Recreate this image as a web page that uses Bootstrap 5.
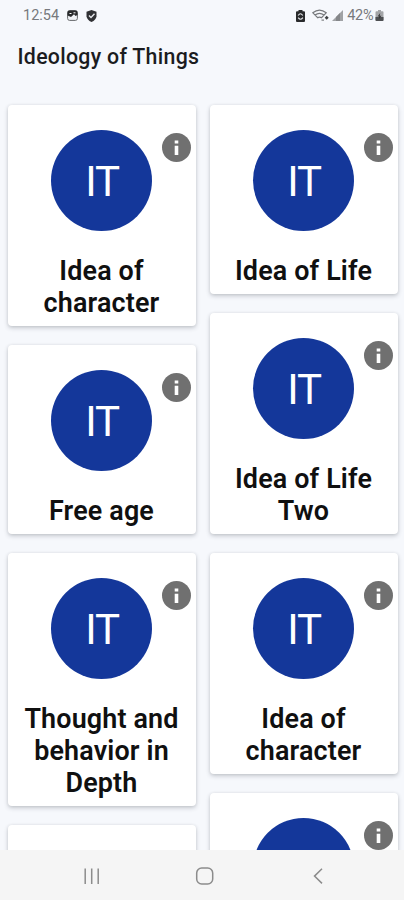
<!DOCTYPE html>
<html lang="en">
<head>
<meta charset="utf-8">
<meta name="viewport" content="width=device-width, initial-scale=1">
<title>Ideology of Things</title>
<link href="https://cdn.jsdelivr.net/npm/bootstrap@5.3.0/dist/css/bootstrap.min.css" rel="stylesheet">
<style>
body{font-family:Roboto,"Liberation Sans",sans-serif;background:#f6f8fc;color:#111;height:900px}
.status{height:31px;padding:0 20.5px 0 23px;font-size:14.5px;color:#77797d}
.status .level{margin:0 1px 0 4px;letter-spacing:-.2px}
.status .wifi{margin:0 3px 0 7px}
.app-title{height:49px;padding:2px 17.5px 0;font-size:21.3px;font-weight:500;letter-spacing:.3px;line-height:48px;color:#1b1c1f}
.feed{padding:24.6px 6.5px 0 7.5px;gap:14px;min-height:0}
.feed-col{width:188px;flex:none;gap:19px}
.idea{border:0;border-radius:4px;padding:25px 8px 6.5px;box-shadow:0 2px 4px rgba(50,60,70,.25),0 0 3px rgba(50,60,70,.08);flex:none}
.idea-next{min-height:120px}
.avatar{width:101.5px;height:101.5px;background:#14379a;color:#fff;font-size:42px;line-height:1;letter-spacing:-1.2px;padding:4px 0 0 1px}
.info{top:28.4px;right:4.5px;width:29px;height:29px}
.idea h2{font-size:26.9px;line-height:32px;font-weight:600;letter-spacing:.16px;margin:24px 0 0;color:#101010}
.sysnav{height:50px;background:#f5f5f5}
.sysnav svg,.status svg{display:block}
</style>
<script src="https://cdn.jsdelivr.net/npm/bootstrap@5.3.0/dist/js/bootstrap.bundle.min.js"></script>
</head>
<body class="d-flex flex-column overflow-hidden">
<svg class="d-none"><symbol id="info" viewBox="0 0 29 29"><circle cx="14.5" cy="14.5" r="14.5" fill="#707070"/><path d="M12.700 7.400h3.600v3.200h-3.600zM12.700 12.700h3.600v9.300h-3.600z" fill="#fff"/></symbol></svg>
<header class="flex-shrink-0">
  <div class="status d-flex align-items-center justify-content-between">
    <div class="d-flex align-items-center">
      <span class="clock">12:54</span>
      <svg class="ms-2" width="11" height="11" viewBox="0 0 11 11"><rect x=".6" y=".6" width="9.800" height="9.800" rx="2" fill="#f0f2f6" stroke="#66686b"/><path d="M.5 2.500Q.5.500 2.500.500h6q2 0 2 2V5L8.500 6 7 4.200 4 7 .5 5.500z" fill="#292a2c"/><path d="M2.500 3.500h2M6.500 2.800h2" stroke="#fff"/></svg>
      <svg class="ms-2" width="11" height="12" viewBox="0 0 11 12"><path d="M5.500 0 10.500 1.800V6.200Q10 10 5.500 12 1 10 .5 6.200V1.800z" fill="#303134"/><path d="M3 5.400 5 7.400 8.500 3.700" fill="none" stroke="#e5e7eb" stroke-width="1.400"/></svg>
    </div>
    <div class="d-flex align-items-center">
      <svg width="9" height="12" viewBox="0 0 9 12"><path d="M2.500 0h4v1.200H8q1 0 1 1V11q0 1-1 1H1q-1 0-1-1V2.200q0-1 1-1h1.500z" fill="#292a2c"/><path d="M2.100 5.500Q4.500 2 6.800 5.500M6.900 7.600Q4.500 11 2.200 7.600" fill="none" stroke="#e4e6ea" stroke-width="1.100"/></svg>
      <svg class="wifi" width="17" height="13" viewBox="0 0 17 13"><path d="M.8 3.800Q7.500-1.600 14.200 3.800L9.500 8.700Q7.500 7.400 5.700 8.700zM3 6Q7.500 2.700 12 6" fill="none" stroke="#77797c" stroke-width="1.200"/><path d="M9.500 10.300h2.500v1.700H9.500z" fill="#a0a2a5"/><path d="m14.700 6.800 2 2-2 2-2-2z" fill="#3c3e41"/></svg>
      <svg width="11" height="11" viewBox="0 0 11 11"><path d="M0 11 11 0V11z" fill="#a0a2a5"/><path d="M4 11V7L8 3V11z" fill="#85878a"/></svg>
      <span class="level">42%</span>
      <svg width="9" height="11" viewBox="0 0 8 11"><path d="M2.500 0h3v1.200H7q1 0 1 1V10q0 1-1 1H1q-1 0-1-1V2.200q0-1 1-1h1.500z" fill="#a3a5a8"/><path d="M0 7h8v3q0 1-1 1H1q-1 0-1-1z" fill="#4d4f52"/><path d="m4.700 3-2.600 3.500h1.600L3.300 9.300 6 5.800H4.300z" fill="#38393b"/></svg>
    </div>
  </div>
  <h1 class="app-title m-0">Ideology of Things</h1>
</header>
<main class="feed d-flex flex-grow-1 overflow-hidden">
  <div class="feed-col d-flex flex-column">
    <article class="idea card text-center align-items-center"><div class="avatar rounded-circle d-flex align-items-center justify-content-center">IT</div><svg class="info position-absolute"><use href="#info"/></svg><h2>Idea of<br>character</h2></article>
    <article class="idea card text-center align-items-center"><div class="avatar rounded-circle d-flex align-items-center justify-content-center">IT</div><svg class="info position-absolute"><use href="#info"/></svg><h2>Free age</h2></article>
    <article class="idea card text-center align-items-center"><div class="avatar rounded-circle d-flex align-items-center justify-content-center">IT</div><svg class="info position-absolute"><use href="#info"/></svg><h2>Thought and<br>behavior in<br>Depth</h2></article>
    <article class="idea idea-next card"></article>
  </div>
  <div class="feed-col d-flex flex-column">
    <article class="idea card text-center align-items-center"><div class="avatar rounded-circle d-flex align-items-center justify-content-center">IT</div><svg class="info position-absolute"><use href="#info"/></svg><h2>Idea of Life</h2></article>
    <article class="idea card text-center align-items-center"><div class="avatar rounded-circle d-flex align-items-center justify-content-center">IT</div><svg class="info position-absolute"><use href="#info"/></svg><h2>Idea of Life<br>Two</h2></article>
    <article class="idea card text-center align-items-center"><div class="avatar rounded-circle d-flex align-items-center justify-content-center">IT</div><svg class="info position-absolute"><use href="#info"/></svg><h2>Idea of<br>character</h2></article>
    <article class="idea idea-next card align-items-center"><div class="avatar rounded-circle"></div><svg class="info position-absolute"><use href="#info"/></svg></article>
  </div>
</main>
<nav class="sysnav d-flex flex-shrink-0 justify-content-center align-items-center position-relative" aria-label="System navigation">
  <svg width="404" height="50" viewBox="0 0 404 50" fill="none" stroke="#8c8c8c" stroke-width="1.500"><path d="M85.200 18.500v15.500M91.700 18.500v15.500M98.200 18.500v15.500"/><rect x="196.700" y="18" width="16" height="16" rx="5"/><path d="m322 18.800-7.500 7.300 7.500 7.300"/></svg>
</nav>
</body>
</html>
